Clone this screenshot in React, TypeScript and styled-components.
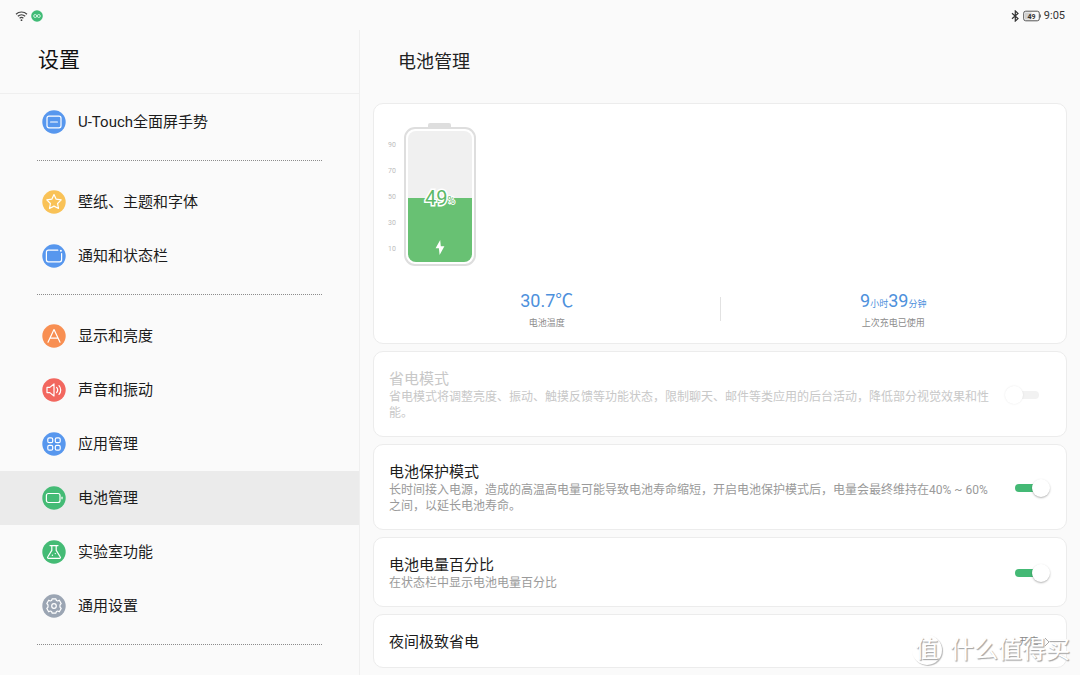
import React from "react";
import styled, { createGlobalStyle } from "styled-components";

const GlobalStyle = createGlobalStyle`
  * { box-sizing: border-box; }
  html, body { margin: 0; height: 100%; }
  body {
    background: #fafafa;
    color: #1c1c1c;
    font-family: Roboto, "Noto Sans CJK SC", sans-serif;
    overflow: hidden;
  }
  #root { height: 100%; }
  h1, h2, h3, p, ul { margin: 0; padding: 0; font-weight: 400; }
  ul { list-style: none; }
`;

const Screen = styled.div`
  position: relative;
  display: flex;
  flex-direction: column;
  height: 100vh;
  overflow: hidden;
`;

const StatusBar = styled.header`
  display: flex;
  flex: none;
  justify-content: space-between;
  align-items: center;
  height: 30px;
  padding: 1px 15px 0;
`;

const StatusGroup = styled.div`
  display: flex;
  align-items: center;
  gap: 3px;
  font-size: 11px;
  line-height: 16px;
  color: #333;
  svg { display: block; }
`;

const Columns = styled.div`
  display: grid;
  grid-template-columns: 1fr 2fr;
  flex: 1;
  min-height: 0;
`;

const Sidebar = styled.nav`
  min-width: 0;
  border-right: 1px solid #efefef;
  overflow: hidden;
`;

const SidebarHeader = styled.div`
  height: 64px;
  margin-bottom: 1px;
  padding: 14px 38px;
  border-bottom: 1px solid #efefef;
`;

const SidebarTitle = styled.h1`
  font-size: 21px;
  line-height: 32px;
  color: #111;
`;

const Group = styled.ul`
  & + & {
    position: relative;
    padding-top: 26px;
  }
  & + &::before {
    content: "";
    position: absolute;
    top: 11px;
    left: 37px;
    right: 37px;
    border-top: 1px dotted #8c8c8c;
  }
`;

const NavItem = styled.a<{ $active?: boolean }>`
  display: flex;
  align-items: center;
  gap: 12px;
  height: 54px;
  padding: 0 42px;
  background: ${(p) => (p.$active ? "#ebebeb" : "transparent")};
  color: inherit;
  font-size: 15px;
  line-height: 24px;
  text-decoration: none;
  white-space: nowrap;
`;

const Badge = styled.svg`
  flex: none;
  width: 24px;
  height: 24px;
  fill: none;
  stroke: #fff;
  stroke-width: 1.2;
  stroke-linecap: round;
  stroke-linejoin: round;
`;

const Main = styled.main`
  min-width: 0;
  padding: 0 13px;
  overflow: hidden;
`;

const PageTitle = styled.h2`
  height: 73px;
  padding: 18px 25px;
  font-size: 18px;
  line-height: 28px;
  color: #222;
`;

const Cards = styled.div`
  display: flex;
  flex-direction: column;
  gap: 7px;
`;

const Card = styled.section`
  border: 1px solid #ececec;
  border-radius: 10px;
  background: #fff;
`;

const OverviewCard = styled(Card)`
  padding: 19px 0 12px;
`;

const Gauge = styled.div`
  display: flex;
  align-items: flex-end;
  gap: 8px;
  padding-left: 14px;
`;

const Scale = styled.div`
  display: flex;
  flex-direction: column;
  justify-content: space-between;
  height: 116px;
  margin-bottom: 11px;
  font-size: 7px;
  line-height: 12px;
  color: #bcbcbc;
`;

const BatteryShape = styled.div`
  display: flex;
  flex-direction: column;
  align-items: center;
  width: 72px;
`;

const BatteryCap = styled.div`
  width: 23px;
  height: 4px;
  border-radius: 2px 2px 0 0;
  background: #dedede;
`;

const BatteryBody = styled.div`
  width: 100%;
  height: 139px;
  padding: 2px;
  border: 2px solid #dedede;
  border-radius: 11px;
`;

const BatteryTank = styled.div`
  position: relative;
  display: flex;
  flex-direction: column;
  justify-content: flex-end;
  height: 100%;
  border-radius: 8px;
  background: #f0f0f0;
  overflow: hidden;
`;

const BatteryFill = styled.div`
  display: flex;
  justify-content: center;
  align-items: flex-end;
  padding-bottom: 7px;
  background: #68c173;
`;

const BatteryLevel = styled.div`
  position: absolute;
  inset: 0;
  display: flex;
  justify-content: center;
  align-items: center;
  padding-top: 2px;
  color: #5cb968;
  font-size: 20px;
  line-height: 24px;
  -webkit-text-stroke: 3px #fff;
  paint-order: stroke fill;
  small {
    padding-top: 6px;
    font-size: 10px;
    -webkit-text-stroke: 2px #fff;
  }
`;

const Stats = styled.div`
  display: flex;
  align-items: center;
  margin-top: 21px;
`;

const Stat = styled.div`
  flex: 1;
  text-align: center;
`;

const StatRule = styled.div`
  width: 1px;
  height: 24px;
  background: #e2e2e2;
`;

const StatValue = styled.p`
  display: flex;
  align-items: baseline;
  justify-content: center;
  height: 28px;
  font-size: 18px;
  line-height: 28px;
  color: #4d90dc;
  small {
    font-size: 9px;
    line-height: 16px;
  }
`;

const StatLabel = styled.p`
  font-size: 9px;
  line-height: 16px;
  color: #8c8c8c;
`;

const SettingCard = styled(Card)<{ $disabled?: boolean }>`
  display: flex;
  align-items: center;
  justify-content: space-between;
  gap: 12px;
  padding: 17px 16px 15px 15px;
  color: ${(p) => (p.$disabled ? "#c8c8c8" : "#1c1c1c")};
`;

const SettingLabel = styled.label`
  display: block;
  min-width: 0;
  font-size: 15px;
  line-height: 20px;
`;

const SettingNote = styled.p<{ $disabled?: boolean }>`
  font-size: 12px;
  line-height: 16px;
  color: ${(p) => (p.$disabled ? "#c8c8c8" : "#9a9a9a")};
`;

const Switch = styled.input`
  position: relative;
  flex: none;
  appearance: none;
  width: 45px;
  height: 18px;
  margin: 0;
  &::before {
    content: "";
    position: absolute;
    top: 5px;
    left: 10px;
    width: 24px;
    height: 8px;
    border-radius: 4px;
    background: #f2f2f2;
  }
  &::after {
    content: "";
    position: absolute;
    top: 0;
    left: 0;
    width: 18px;
    height: 18px;
    border-radius: 50%;
    background: #fff;
    box-shadow: 0 0 2px rgba(0, 0, 0, 0.1);
  }
  &:checked::before { background: #44b975; }
  &:checked::after {
    left: 27px;
    box-shadow: 0 1px 2px rgba(0, 0, 0, 0.3);
  }
`;

const LinkButton = styled.button`
  display: flex;
  align-items: center;
  gap: 5px;
  padding: 0;
  border: 0;
  background: none;
  color: #888;
  font-family: inherit;
  font-size: 10px;
  line-height: 16px;
`;

const Watermark = styled.div`
  position: absolute;
  right: 10px;
  bottom: 9px;
  display: flex;
  align-items: center;
  gap: 8px;
  color: #fff;
  font-size: 24px;
  line-height: 32px;
  text-shadow: 1px 1px 1px #a8a8a8, 1px 1px 1px #c8c8c8;
`;

const WatermarkSeal = styled.span`
  display: flex;
  align-items: center;
  justify-content: center;
  width: 30px;
  height: 30px;
  border-radius: 50%;
  box-shadow: 1px 1px 1px #b8b8b8;
  font-size: 23px;
`;

type Item = { label: string; color: string; icon: React.ReactNode; active?: boolean };

const groups: Item[][] = [
  [
    {
      label: "U-Touch全面屏手势",
      color: "#5797ee",
      icon: (
        <>
          <rect x="5" y="6.2" width="14" height="11.600" rx="2" />
          <path d="M8.6 12h6.8" />
        </>
      ),
    },
  ],
  [
    {
      label: "壁纸、主题和字体",
      color: "#f9c257",
      icon: <path d="M12 4.6l2.2 4.6 5 .7-3.6 3.6.9 5-4.5-2.4-4.5 2.4.9-5-3.6-3.6 5-.7z" />,
    },
    {
      label: "通知和状态栏",
      color: "#5797ee",
      icon: (
        <>
          <path d="M15.8 6.2H6.4a2 2 0 0 0-2 2v7.600a2 2 0 0 0 2 2h11.200a2 2 0 0 0 2-2V9.600" />
          <circle cx="18.900" cy="6.800" r="1" fill="#fff" stroke="none" />
        </>
      ),
    },
  ],
  [
    {
      label: "显示和亮度",
      color: "#f88f52",
      icon: <path d="M6 18.200L12 5.600l6 12.600M8.200 14.200h7.600" />,
    },
    {
      label: "声音和振动",
      color: "#f2675f",
      icon: (
        <>
          <path d="M5 9.400h2.800L12 6v12l-4.200-3.400H5z" />
          <path d="M14.600 9.400a4 4 0 0 1 0 5.200M17 7.600a6.500 6.500 0 0 1 0 8.800" />
        </>
      ),
    },
    {
      label: "应用管理",
      color: "#5797ee",
      icon: (
        <>
          <rect x="5.800" y="5.800" width="4.900" height="4.900" rx="1.500" />
          <rect x="13.300" y="5.800" width="4.900" height="4.900" rx="1.500" />
          <rect x="5.800" y="13.300" width="4.900" height="4.900" rx="1.500" />
          <rect x="13.300" y="13.300" width="4.900" height="4.900" rx="1.500" />
        </>
      ),
    },
    {
      label: "电池管理",
      color: "#44bb75",
      active: true,
      icon: (
        <>
          <rect x="4.400" y="7.500" width="13.600" height="9" rx="2" />
          <path d="M20 11.200v1.600" />
        </>
      ),
    },
    {
      label: "实验室功能",
      color: "#44bb75",
      icon: (
        <>
          <path d="M8 5.600h8M9.800 5.600v4.800L5.700 17a.9.9 0 0 0 .8 1.400h11a.9.9 0 0 0 .8-1.400l-4.100-6.600V5.600" />
          <circle cx="10.400" cy="15.300" r=".7" fill="#fff" stroke="none" />
          <circle cx="13.300" cy="13.600" r=".7" fill="#fff" stroke="none" />
        </>
      ),
    },
    {
      label: "通用设置",
      color: "#9ba5b3",
      icon: (
        <>
          <path d="M10.100 4.800L13.900 4.800L14.400 6.500L15.700 7L17.300 6.200L19.200 9.500L18 10.800L18 13.200L19.200 14.500L17.300 17.800L15.700 17L14.400 17.500L13.900 19.200L10.100 19.200L9.600 17.500L8.300 17L6.700 17.800L4.800 14.500L6 13.200L6 10.800L4.800 9.500L6.700 6.200L8.300 7L9.600 6.500Z" />
          <circle cx="12" cy="12" r="2.300" />
        </>
      ),
    },
  ],
];

type Setting = { id: string; title: string; note: string; on: boolean; disabled?: boolean };

const settings: Setting[] = [
  {
    id: "saver",
    title: "省电模式",
    note: "省电模式将调整亮度、振动、触摸反馈等功能状态，限制聊天、邮件等类应用的后台活动，降低部分视觉效果和性能。",
    on: false,
    disabled: true,
  },
  {
    id: "protect",
    title: "电池保护模式",
    note: "长时间接入电源，造成的高温高电量可能导致电池寿命缩短，开启电池保护模式后，电量会最终维持在40% ~ 60%之间，以延长电池寿命。",
    on: true,
  },
  {
    id: "percent",
    title: "电池电量百分比",
    note: "在状态栏中显示电池电量百分比",
    on: true,
  },
];

const level = 49;

export default function App() {
  return (
    <Screen lang="zh-CN">
      <GlobalStyle />
      <StatusBar>
        <StatusGroup>
          <svg width="13" height="12" viewBox="0 0 13 12" fill="none" stroke="#444" strokeWidth="1.2">
            <path d="M1 4.200a8 8 0 0 1 11 0M2.800 6.300a5.400 5.400 0 0 1 7.400 0M4.600 8.300a2.800 2.800 0 0 1 3.800 0" />
            <circle cx="6.500" cy="10.200" r=".9" fill="#444" stroke="none" />
          </svg>
          <svg width="12" height="12" viewBox="0 0 12 12">
            <circle cx="6" cy="6" r="5.800" fill="#40bb76" />
            <g fill="none" stroke="#d9f7e5" strokeWidth=".9">
              <circle cx="4.200" cy="6" r="1.500" />
              <circle cx="7.800" cy="6" r="1.500" />
            </g>
          </svg>
        </StatusGroup>
        <StatusGroup>
          <svg width="9" height="12" viewBox="0 0 9 12" fill="none" stroke="#333" strokeWidth="1.200">
            <path d="M1 3.200l6 5.400L4.300 11V1L7 3.400 1 8.800" />
          </svg>
          <svg width="18" height="12" viewBox="0 0 18 12">
            <rect x=".7" y="1.200" width="15.600" height="9.600" rx="2" fill="#fafafa" stroke="#555" />
            <rect x="2" y="2.500" width="6.500" height="7" fill="#d0d0d0" />
            <path d="M17.300 4.500v3" stroke="#555" />
            <text x="8.500" y="8.700" textAnchor="middle" fontSize="7" fontWeight="700" fill="#333">
              {level}
            </text>
          </svg>
          <span>9:05</span>
        </StatusGroup>
      </StatusBar>
      <Columns>
        <Sidebar>
          <SidebarHeader>
            <SidebarTitle>设置</SidebarTitle>
          </SidebarHeader>
          {groups.map((items, i) => (
            <Group key={i}>
              {items.map((item) => (
                <li key={item.label}>
                  <NavItem href="#" $active={item.active} aria-current={item.active ? "page" : undefined}>
                    <Badge viewBox="0 0 24 24" aria-hidden="true">
                      <circle cx="12" cy="12" r="11.700" fill={item.color} stroke="none" />
                      {item.icon}
                    </Badge>
                    {item.label}
                  </NavItem>
                </li>
              ))}
            </Group>
          ))}
          <Group />
        </Sidebar>
        <Main>
          <PageTitle>电池管理</PageTitle>
          <Cards>
            <OverviewCard>
              <Gauge>
                <Scale>
                  {[90, 70, 50, 30, 10].map((n) => (
                    <span key={n}>{n}</span>
                  ))}
                </Scale>
                <BatteryShape>
                  <BatteryCap />
                  <BatteryBody>
                    <BatteryTank>
                      <BatteryFill style={{ height: `${level}%` }}>
                        <svg width="10" height="15" viewBox="0 0 10 15" fill="#fff">
                          <path d="M5.200 0L.6 8.300h3.300L4.600 15l4.800-8.700H5.800z" />
                        </svg>
                      </BatteryFill>
                      <BatteryLevel>
                        {level}
                        <small>%</small>
                      </BatteryLevel>
                    </BatteryTank>
                  </BatteryBody>
                </BatteryShape>
              </Gauge>
              <Stats>
                <Stat>
                  <StatValue>30.7℃</StatValue>
                  <StatLabel>电池温度</StatLabel>
                </Stat>
                <StatRule />
                <Stat>
                  <StatValue>
                    9<small>小时</small>39<small>分钟</small>
                  </StatValue>
                  <StatLabel>上次充电已使用</StatLabel>
                </Stat>
              </Stats>
            </OverviewCard>
            {settings.map((s) => (
              <SettingCard key={s.id} $disabled={s.disabled}>
                <div>
                  <SettingLabel htmlFor={s.id}>{s.title}</SettingLabel>
                  <SettingNote $disabled={s.disabled}>{s.note}</SettingNote>
                </div>
                <Switch id={s.id} type="checkbox" role="switch" defaultChecked={s.on} disabled={s.disabled} />
              </SettingCard>
            ))}
            <SettingCard>
              <SettingLabel as="h3">夜间极致省电</SettingLabel>
              <LinkButton type="button">
                开启
                <svg width="6" height="10" viewBox="0 0 6 10" fill="none" stroke="#aaa">
                  <path d="M1 1l4 4-4 4" />
                </svg>
              </LinkButton>
            </SettingCard>
          </Cards>
        </Main>
      </Columns>
      <Watermark>
        <WatermarkSeal>值</WatermarkSeal>
        什么值得买
      </Watermark>
    </Screen>
  );
}
